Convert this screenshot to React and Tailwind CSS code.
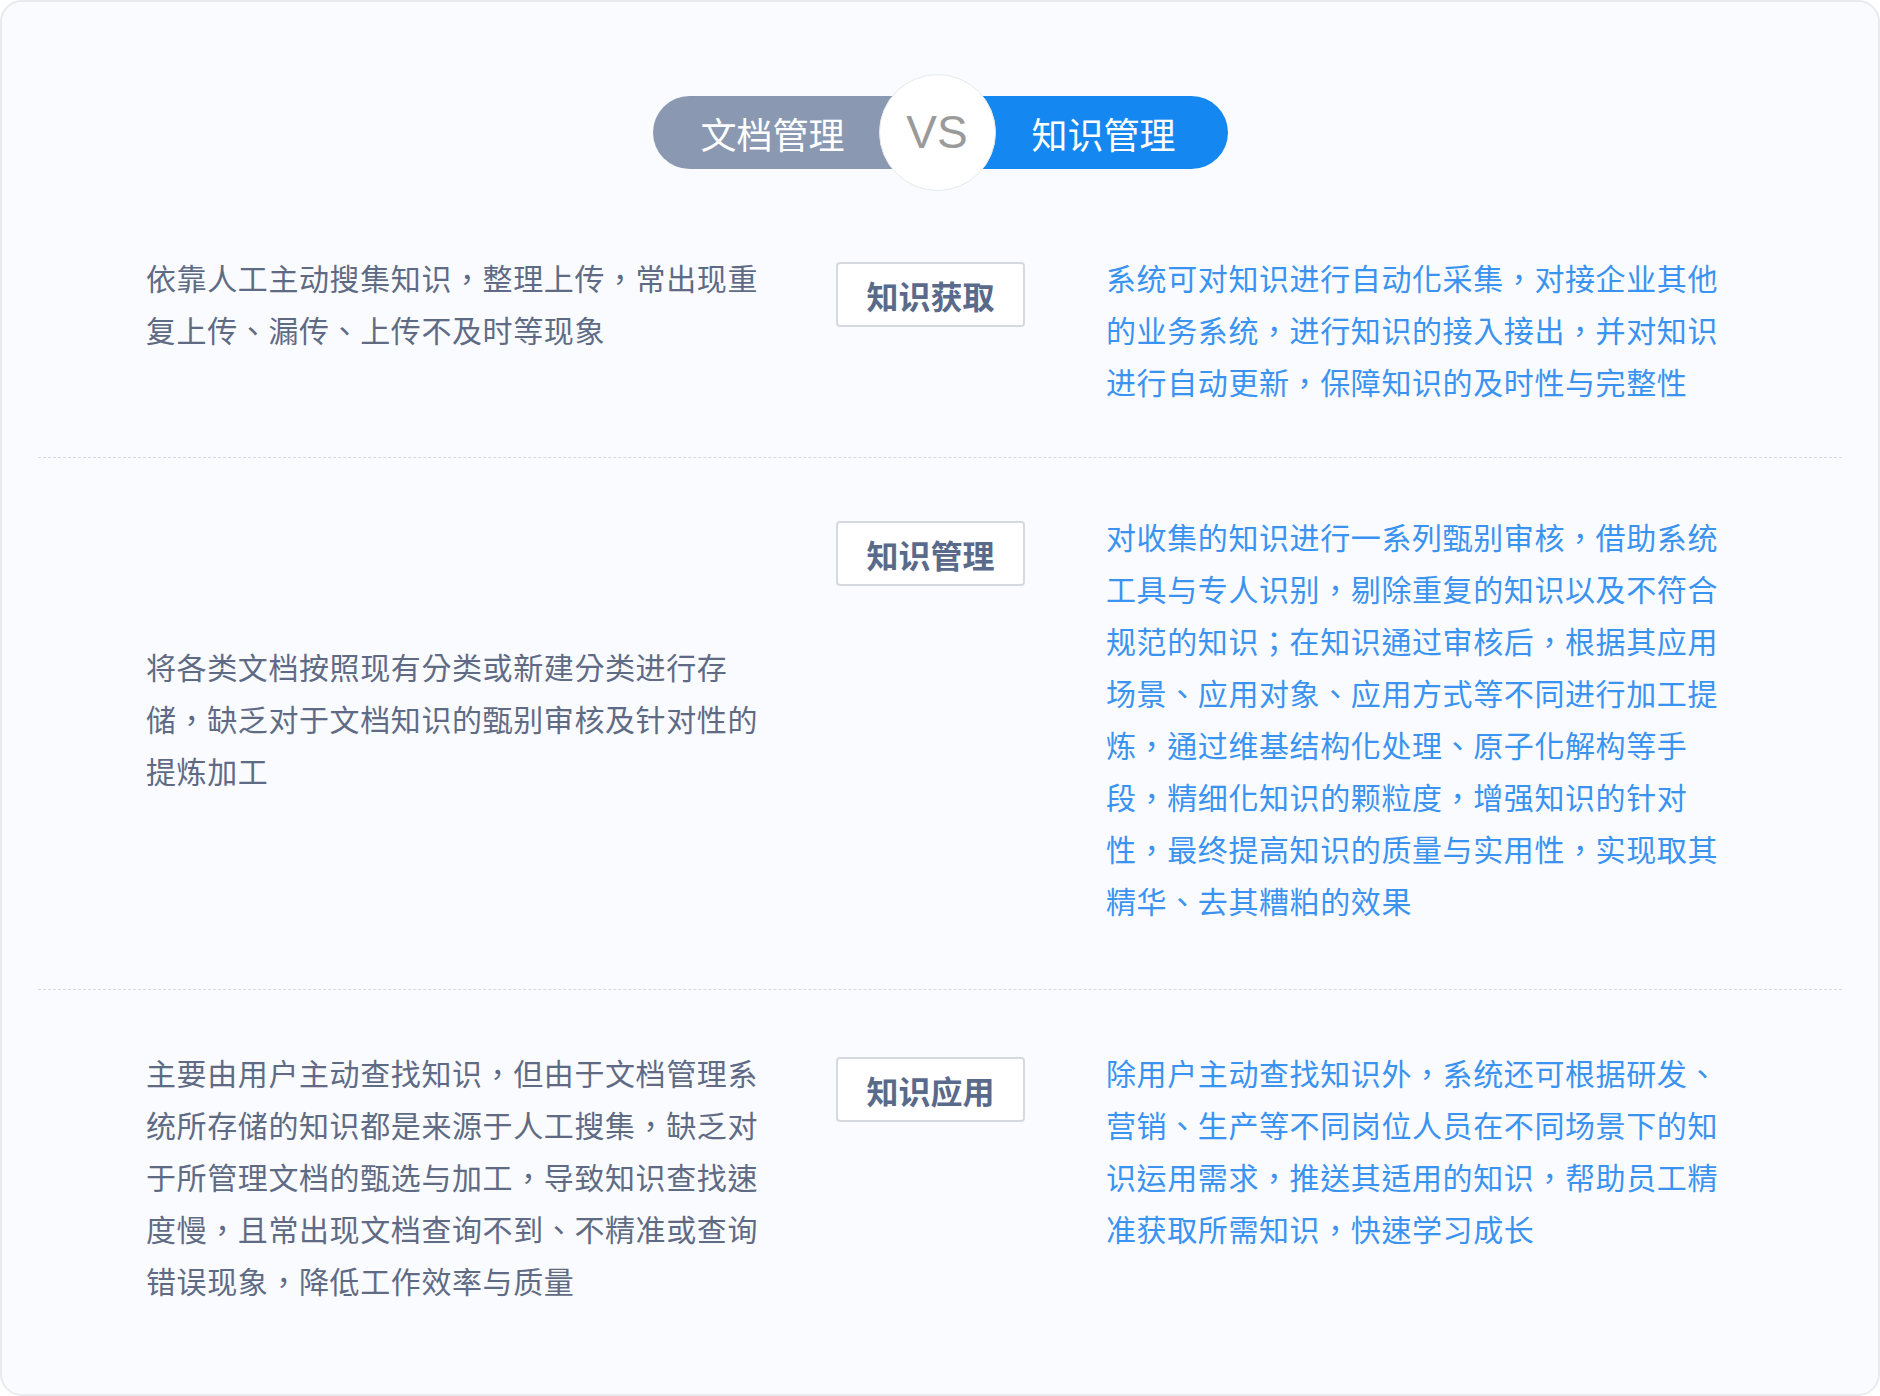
export default function App() {
  const font = { fontFamily: '"Noto Sans CJK TC", "Noto Sans", sans-serif' };
  const Row = ({ left, tag, right, leftCenter, cls }) => (
    <div className={`flex items-start ${cls}`}>
      <div className={`w-[620px] ml-[144px] text-[30px] leading-[52px] tracking-[0.6px] text-[#5f6b85] ${leftCenter ? 'self-center' : ''}`}>{left}</div>
      <div className="ml-[70px] mt-[11px] w-[189px] h-[65px] border-2 border-[#d5d9e0] rounded-[4px] bg-white flex items-center justify-center text-[32px] font-bold text-[#5a6a8a] shrink-0">{tag}</div>
      <div className="ml-[81px] w-[626px] text-[30px] leading-[52px] tracking-[0.6px] text-[#3a93f0]">{right}</div>
    </div>
  );
  return (
    <div style={font} className="w-[1880px] h-[1396px] bg-white">
      <div className="w-full h-full bg-[#fafbfe] border-2 border-[#e8eaee] rounded-[22px] flex flex-col">
        <div className="flex justify-center pt-[94px]">
          <div className="relative flex items-center">
            <div className="w-[300px] h-[73px] rounded-l-full bg-[#8a99b1] text-white text-[36px] flex items-center pl-[48px]">文档管理</div>
            <div className="w-[275px] h-[73px] rounded-r-full bg-[#1488f0] text-white text-[36px] flex items-center justify-end pr-[52px]">知识管理</div>
            <div className="absolute left-[226px] top-[-22px] w-[117px] h-[117px] rounded-full bg-white border border-[#e6e8ec] flex items-center justify-center text-[46px] text-[#9a9a9a]" style={{ fontFamily: '"Liberation Sans", sans-serif' }}>VS</div>
          </div>
        </div>
        <Row cls="pt-[82px] pb-[50px]" left="依靠人工主动搜集知识，整理上传，常出现重复上传、漏传、上传不及时等现象" tag="知识获取" right="系统可对知识进行自动化采集，对接企业其他的业务系统，进行知识的接入接出，并对知识进行自动更新，保障知识的及时性与完整性" />
        <div className="mx-[36px] border-t border-dashed border-[#d3d8e6]" />
        <Row cls="pt-[52px] pb-[63px]" leftCenter left="将各类文档按照现有分类或新建分类进行存储，缺乏对于文档知识的甄别审核及针对性的提炼加工" tag="知识管理" right="对收集的知识进行一系列甄别审核，借助系统工具与专人识别，剔除重复的知识以及不符合规范的知识；在知识通过审核后，根据其应用场景、应用对象、应用方式等不同进行加工提炼，通过维基结构化处理、原子化解构等手段，精细化知识的颗粒度，增强知识的针对性，最终提高知识的质量与实用性，实现取其精华、去其糟粕的效果" />
        <div className="mx-[36px] border-t border-dashed border-[#d3d8e6]" />
        <Row cls="pt-[56px]" left="主要由用户主动查找知识，但由于文档管理系统所存储的知识都是来源于人工搜集，缺乏对于所管理文档的甄选与加工，导致知识查找速度慢，且常出现文档查询不到、不精准或查询错误现象，降低工作效率与质量" tag="知识应用" right="除用户主动查找知识外，系统还可根据研发、营销、生产等不同岗位人员在不同场景下的知识运用需求，推送其适用的知识，帮助员工精准获取所需知识，快速学习成长" />
      </div>
    </div>
  );
}
